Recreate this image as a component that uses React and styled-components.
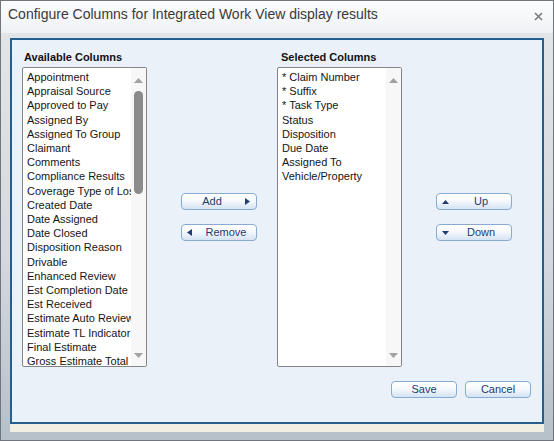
import React from "react";
import styled, { createGlobalStyle } from "styled-components";

const availableColumns = [
  "Appointment",
  "Appraisal Source",
  "Approved to Pay",
  "Assigned By",
  "Assigned To Group",
  "Claimant",
  "Comments",
  "Compliance Results",
  "Coverage Type of Loss",
  "Created Date",
  "Date Assigned",
  "Date Closed",
  "Disposition Reason",
  "Drivable",
  "Enhanced Review",
  "Est Completion Date",
  "Est Received",
  "Estimate Auto Review",
  "Estimate TL Indicator",
  "Final Estimate",
  "Gross Estimate Total",
];

const selectedColumns = [
  "* Claim Number",
  "* Suffix",
  "* Task Type",
  "Status",
  "Disposition",
  "Due Date",
  "Assigned To",
  "Vehicle/Property",
];

const GlobalStyle = createGlobalStyle`
  html, body {
    margin: 0;
    padding: 0;
    background: #ffffff;
  }
  body {
    font-family: "Liberation Sans", Arial, sans-serif;
  }
`;

const Triangle = ({ dir, w = 5, h = 7, color = "#1f3d6e" }) => {
  const points = {
    right: `0,0 ${w},${h / 2} 0,${h}`,
    left: `${w},0 0,${h / 2} ${w},${h}`,
    up: `0,${h} ${w / 2},0 ${w},${h}`,
    down: `0,0 ${w},0 ${w / 2},${h}`,
  }[dir];
  return (
    <Glyph width={w} height={h} viewBox={`0 0 ${w} ${h}`}>
      <polygon points={points} fill={color} />
    </Glyph>
  );
};

const ListBox = ({ items, thumb }) => (
  <Box>
    <Items>
      {items.map((item) => (
        <Item key={item}>{item}</Item>
      ))}
    </Items>
    <Track>
      <ArrowBox $top>
        <Triangle dir="up" w={9} h={5} color="#a2a2a2" />
      </ArrowBox>
      {thumb && <Thumb style={{ height: thumb }} />}
      <Spacer />
      <ArrowBox>
        <Triangle dir="down" w={9} h={5} color="#a2a2a2" />
      </ArrowBox>
    </Track>
  </Box>
);

const ArrowButton = ({ label, dir, side }) => {
  const vertical = dir === "up" || dir === "down";
  return (
    <Button $w={76} $side={side}>
      <IconSlot $side={side}>
        <Triangle dir={dir} w={vertical ? 7 : 5} h={vertical ? 4 : 7} />
      </IconSlot>
      <ButtonText>{label}</ButtonText>
    </Button>
  );
};

const App = () => {
  return (
    <>
      <GlobalStyle />
      <Window>
        <TitleBar>
          <Title>Configure Columns for Integrated Work View display results</Title>
          <Close width="9" height="9" viewBox="0 0 9 9">
            <path d="M1 1 L8 8 M8 1 L1 8" stroke="#7a7a7a" strokeWidth="1.6" />
          </Close>
        </TitleBar>
        <Body>
          <Panel>
            <Row>
              <Column>
                <Label $indent={2}>Available Columns</Label>
                <ListBox items={availableColumns} thumb={103} />
              </Column>
              <ButtonColumn $ml={34} $mr={20}>
                <ArrowButton label="Add" dir="right" side="right" />
                <ArrowButton label="Remove" dir="left" side="left" />
              </ButtonColumn>
              <Column>
                <Label $indent={4}>Selected Columns</Label>
                <ListBox items={selectedColumns} />
              </Column>
              <ButtonColumn $ml={34} $mr={0}>
                <ArrowButton label="Up" dir="up" side="left" />
                <ArrowButton label="Down" dir="down" side="left" />
              </ButtonColumn>
            </Row>
            <Footer>
              <Button $w={66}>
                <ButtonText>Save</ButtonText>
              </Button>
              <Button $w={66}>
                <ButtonText>Cancel</ButtonText>
              </Button>
            </Footer>
          </Panel>
          <StatusStrip />
        </Body>
      </Window>
    </>
  );
};

const Window = styled.div`
  width: 554px;
  height: 441px;
  box-sizing: border-box;
  border: 1px solid #70767c;
  display: flex;
  flex-direction: column;
  background: #ffffff;
`;

const TitleBar = styled.div`
  height: 32px;
  flex-shrink: 0;
  box-sizing: border-box;
  display: flex;
  justify-content: space-between;
  align-items: flex-start;
  padding: 5px 10px 0 7px;
  background: linear-gradient(#fbfcfd, #eff2f5);
`;

const Title = styled.div`
  font-size: 14px;
  line-height: 16px;
  color: #3a3a3a;
`;

const Close = styled.svg`
  margin-top: 6px;
`;

const Body = styled.div`
  flex: 1;
  display: flex;
  flex-direction: column;
  padding: 5px 9px 0;
  background: linear-gradient(#e2e5e8 0%, #d3d9df 55%, #b6c0c9 100%);
`;

const Panel = styled.div`
  height: 386px;
  box-sizing: border-box;
  border: 2px solid #245f90;
  background: #eaf1f9;
  padding: 10px 11px 0 10px;
  display: flex;
  flex-direction: column;
`;

const StatusStrip = styled.div`
  height: 8px;
  background: #f1efe3;
`;

const Row = styled.div`
  display: flex;
  align-items: flex-start;
`;

const Column = styled.div`
  display: flex;
  flex-direction: column;
`;

const Label = styled.div`
  font-size: 11px;
  line-height: 14px;
  font-weight: bold;
  color: #111111;
  padding-left: ${(p) => p.$indent}px;
  margin-bottom: 3px;
`;

const Box = styled.div`
  width: 125px;
  height: 300px;
  box-sizing: border-box;
  border: 1px solid #858585;
  border-radius: 2px;
  background: #ffffff;
  display: flex;
  overflow: hidden;
`;

const Items = styled.div`
  flex: 1;
  min-width: 0;
  overflow: hidden;
  padding: 2px 0 0 4px;
`;

const Item = styled.div`
  font-size: 11px;
  line-height: 14.2px;
  white-space: nowrap;
  color: #151515;
`;

const Track = styled.div`
  width: 15px;
  flex-shrink: 0;
  background: #f7f7f7;
  display: flex;
  flex-direction: column;
  align-items: center;
`;

const ArrowBox = styled.div`
  height: 22px;
  width: 100%;
  box-sizing: border-box;
  padding-top: ${(p) => (p.$top ? 3 : 0)}px;
  display: flex;
  align-items: center;
  justify-content: center;
`;

const Glyph = styled.svg`
  flex-shrink: 0;
  display: block;
`;

const Thumb = styled.div`
  width: 9px;
  margin-top: 1px;
  border-radius: 5px;
  background: #8b8b8b;
`;

const Spacer = styled.div`
  flex: 1;
`;

const ButtonColumn = styled.div`
  margin: 17px ${(p) => p.$mr}px 0 ${(p) => p.$ml}px;
  height: 300px;
  display: flex;
  flex-direction: column;
  justify-content: center;
  gap: 14px;
`;

const Button = styled.button`
  width: ${(p) => p.$w}px;
  height: 17px;
  box-sizing: border-box;
  padding: 0;
  ${(p) =>
    p.$side === "left"
      ? "padding-right: 4px;"
      : p.$side === "right"
      ? "padding-left: 4px;"
      : ""}
  display: flex;
  flex-direction: ${(p) => (p.$side === "right" ? "row-reverse" : "row")};
  align-items: center;
  border: 1px solid #88acd1;
  border-radius: 4px;
  background: linear-gradient(#ffffff 0%, #f6f9fc 45%, #d4e3f2 100%);
  font-family: "Liberation Sans", Arial, sans-serif;
  font-size: 11px;
  color: #1e3b6c;
  cursor: pointer;
`;

const IconSlot = styled.span`
  width: 18px;
  flex-shrink: 0;
  box-sizing: border-box;
  display: flex;
  align-items: center;
  justify-content: ${(p) => (p.$side === "right" ? "flex-end" : "flex-start")};
  ${(p) => (p.$side === "right" ? "padding-right: 6px;" : "padding-left: 5px;")}
`;

const ButtonText = styled.span`
  flex: 1;
  text-align: center;
  line-height: 15px;
`;

const Footer = styled.div`
  display: flex;
  justify-content: flex-end;
  gap: 8px;
  margin-top: 14px;
`;

export default App;
